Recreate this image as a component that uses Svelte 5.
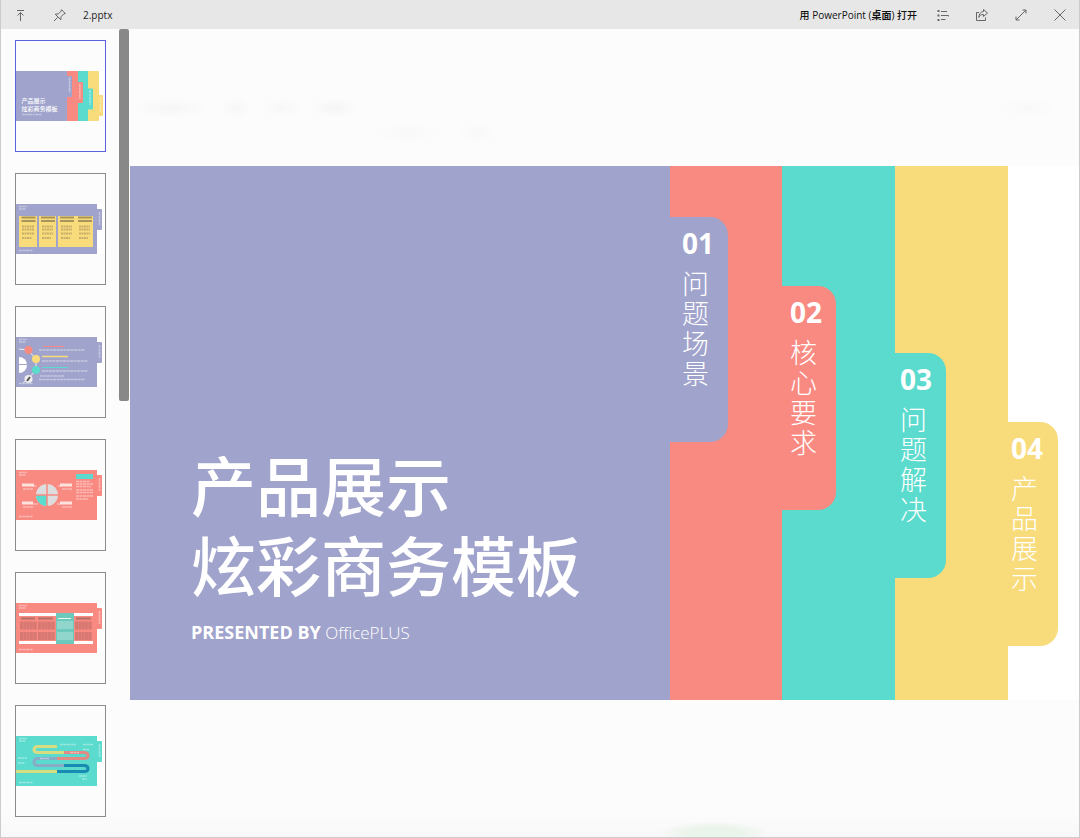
<script lang="ts">
	interface Tab {
		no: string;
		label: string;
		color: string;
		top: number;
		width: number;
		inset: number;
	}

	const purple = '#a0a3cb';
	const coral = '#f98a82';
	const teal = '#5bdbcd';
	const yellow = '#f8db7a';

	// top は band の高さに対する %
	const tabs: Tab[] = [
		{ no: '01', label: '问题场景', color: purple, top: 9.6, width: 58, inset: 12 },
		{ no: '02', label: '核心要求', color: coral, top: 22.4, width: 54, inset: 8 },
		{ no: '03', label: '问题解决', color: teal, top: 35.1, width: 51, inset: 5 },
		{ no: '04', label: '产品展示', color: yellow, top: 47.9, width: 50, inset: 3 }
	];

	const pages = [
		{ kind: 'cover', color: purple },
		{ kind: 'columns', color: purple },
		{ kind: 'steps', color: purple },
		{ kind: 'pie', color: coral },
		{ kind: 'table', color: coral },
		{ kind: 'road', color: teal }
	];

	let current = $state(0);
</script>

<div class="viewer">
	<header class="toolbar">
		<button class="tool" aria-label="收起">
			<svg viewBox="0 0 14 14"><path d="M3 2.5h7M6.5 13V4.500M3.500 7.500l3-3 3 3" /></svg>
		</button>
		<button class="tool" aria-label="固定">
			<svg viewBox="0 0 14 14"><path d="M1 13l3.700-3.700M8.500 1.700l3.800 3.800-1.500.4-2.700 2.700-.3 3.200-5.600-5.600 3.200-.3 2.700-2.700z" /></svg>
		</button>
		<span class="filename">2.pptx</span>
		<button class="open">用 PowerPoint (<b>桌面</b>) 打开</button>
		<button class="tool" aria-label="列表">
			<svg viewBox="0 0 14 14">
				<path d="M1.500 3h2M1.500 7.500h2M1.500 12h2" stroke-width="2" />
				<path d="M5 3.500h6M5 7.500h7.500M5 11.500h4.500M12.500 7.500v1" />
			</svg>
		</button>
		<button class="tool" aria-label="共享">
			<svg viewBox="0 0 14 14"><path d="M4 4.500H1.500v8h9v-3M8.500 1.500L12.500 5l-4 3.500v-2C6 6.500 4.500 7.500 3.800 9.500 4 6 5.500 3.800 8.500 3.500z" /></svg>
		</button>
		<button class="tool" aria-label="全屏">
			<svg viewBox="0 0 14 14"><path d="M2 12L12 2M8.500 2H12v3.500M2 8.500V12h3.500" /></svg>
		</button>
		<button class="tool" aria-label="关闭">
			<svg viewBox="0 0 14 14"><path d="M1.500 1.500l11 11M12.500 1.500l-11 11" /></svg>
		</button>
	</header>

	<div class="body">
		<nav class="sidebar">
			<div class="thumbs">
				{#each pages as page, i}
					<button
						class="thumb"
						class:active={current === i}
						aria-label="幻灯片 {i + 1}"
						onclick={() => (current = i)}
					>
						<svg viewBox="0 0 89 50">
							<rect width="89" height="50" fill="#fff" />
							{#if page.kind === 'cover'}
								<path fill={purple} d="M0 0h51v50H0z" />
								<path fill={coral} d="M51 0h11v50H51z" />
								<path fill={teal} d="M62 0h10v50H62z" />
								<path fill={yellow} d="M72 0h11v50H72z" />
								<rect x="50" y="5" width="6" height="21" rx="1" fill={purple} />
								<rect x="61" y="11" width="6" height="21" rx="1" fill={coral} />
								<rect x="71" y="17.5" width="6" height="21" rx="1" fill={teal} />
								<rect x="82" y="24" width="5" height="21" rx="1" fill={yellow} />
								<path class="faint" d="M53.5 6.5v15M63.8 13v15M74 19v15M84.5 26v15" />
								<text x="5.5" y="32">产品展示</text>
								<text x="5.5" y="39.5">炫彩商务模板</text>
								<path class="faint" d="M6 43.5h12M19 43.5h7" />
							{:else}
								<rect width="81" height="50" fill={page.color} />
								<rect x="79" y="5" width="7" height="21" rx="1" fill={page.color} />
								<path class="faint" d="M3 2.5h8M3 5h7M3 46.5h14M83.5 8v13" />
							{/if}
							{#if page.kind === 'columns'}
								<path fill={yellow} d="M3 12h18v31H3zM23 12h17v31H23zM42 12h35v31H42z" />
								<g fill="none" stroke-width="2">
									<path stroke="#a8955c" d="M5.5 13.5h14M25 13.5h14M44 13.5h14M62 13.5h14M5.5 17h14M25 17h14M44 17h14M62 17h14" />
									<path stroke="#c9b06a" stroke-dasharray="2 .5" d="M6 22.5h12M26 22.5h11M45 22.5h11M63 22.5h11M6 25.5h12M26 25.5h11M45 25.5h11M63 25.5h11M6 29.5h12M26 29.5h11M45 29.5h11M63 29.5h11M6 34h10M26 34h9M45 34h9M63 34h9" />
								</g>
							{:else if page.kind === 'steps'}
								<path fill="#fff" d="M3 20a8 8 0 0 1 0 16z" />
								<path stroke={purple} d="M3 27.5h8" />
								<path stroke="#eee" d="M3 12l9 1 8 9v11l-8 9-5 4" fill="none" />
								<circle cx="12.5" cy="13" r="4" fill={coral} />
								<circle cx="20" cy="22" r="4" fill={yellow} />
								<circle cx="20" cy="33" r="4" fill={teal} />
								<circle cx="12.5" cy="42" r="4" fill="#eee" />
								<path stroke="#555" stroke-width="2" d="M11 44l3-4" />
								<path stroke={coral} d="M27 9.5h21" />
								<path stroke={yellow} stroke-width="1.5" d="M26 19.5h26" />
								<path stroke={teal} d="M26 30.5h26" />
								<path class="faint" d="M23 13h46M26 24h46M26 34h46M23 42.5h46M24 39h24" />
							{:else if page.kind === 'pie'}
								<circle cx="31" cy="25" r="11" fill="#ddd" />
								<path fill={teal} d="M31 25v11a11 11 0 0 1-11-11z" />
								<path stroke={coral} stroke-width="1.5" d="M31 14v22M20 25h22" />
								<rect x="60" y="4" width="17" height="5" fill={teal} />
								<path stroke="#fff" stroke-width="3" opacity=".75" d="M6 15h12M6 33h11M44 15h12M44 33h12" />
								<path class="faint" d="M7 19h10M7 37h10M17 16h4M42 16h4M17 34h5M41 34h4M46 19h10M46 37h10M60 11.5h14M60 14h17M60 16.5h15M60 20h17M60 22.5h17M60 26h17M60 29h12" />
							{:else if page.kind === 'table'}
								<path fill="#fff" d="M3 10h74v3H3zM3 38h74v3H3z" />
								<rect x="40" y="10" width="18" height="31" fill="#6ec9bd" />
								<path stroke="#b46e68" stroke-width="2" d="M5 15.5h14M22 15.5h15M60 15.5h15" />
								<path stroke="#d77972" stroke-width="8" stroke-dasharray="3 .3" d="M4 22.5h17M22 22.5h17M59 22.5h17M4 33h17M22 33h17M59 33h17" />
								<path stroke="#90d6cc" stroke-width="8" d="M41 22h16M41 33h16" />
								<path stroke="#e9f6e8" d="M42 15.5h13" />
							{:else if page.kind === 'road'}
								<g fill="none" stroke-width="3">
									<path stroke="#d8dc80" d="M41 10.5H22q-4 0-4 3t4 3h27M0 35.5h41" />
									<path stroke="#e08c85" d="M48 16.5h20q4 0 4 3t-4 3H40" />
									<path stroke="#86acc6" d="M41 22.5H22q-4 0-4 3.5t4 3.5h27" />
									<path stroke="#178bb2" d="M48 29.5h20q4 0 4 3t-4 3H41" />
								</g>
								<path class="faint" d="M44 8.5h16M67 8.5h10M67 13.5h6M2 22h9M2 27h7M54 16.5h9M24 22.5h9M63 40h8M66 43h5" />
							{/if}
						</svg>
					</button>
				{/each}
			</div>
			<div class="track"><div class="bar"></div></div>
		</nav>

		<main class="stage">
			<article class="slide">
				{#each tabs as tab, i}
					<section class="band" style:background={tab.color}>
						{#if i === 0}
							<div class="cover">
								<h1>产品展示<br />炫彩商务模板</h1>
								<p><b>PRESENTED BY</b> OfficePLUS</p>
							</div>
						{/if}
						<div
							class="tab"
							style:background={tab.color}
							style:top="{tab.top}%"
							style:width="{tab.width}px"
							style:padding-left="{tab.inset}px"
						>
							<strong>{tab.no}</strong>
							<span>{tab.label}</span>
						</div>
					</section>
				{/each}
			</article>
		</main>
	</div>
</div>

<style>
	:global(body) {
		margin: 0;
		background: #fcfcfc;
		font-family: "Open Sans", "Noto Sans CJK SC", sans-serif;
	}

	.viewer {
		display: flex;
		flex-direction: column;
		min-height: 100vh;
		box-sizing: border-box;
		border: 1px solid #ccc;
		border-top: none;
		background:
			radial-gradient(closest-side, #ebf4eb 50%, transparent) 68% 101% / 110px 24px no-repeat,
			radial-gradient(closest-side, #f6f6f6, transparent) 13% 12% / 80px 20px no-repeat,
			radial-gradient(closest-side, #f6f6f6, transparent) 21% 12% / 30px 20px no-repeat,
			radial-gradient(closest-side, #f7f7f7, transparent) 25% 12% / 40px 20px no-repeat,
			radial-gradient(closest-side, #f5f5f5, transparent) 30% 12% / 50px 20px no-repeat,
			radial-gradient(closest-side, #f8f8f8, transparent) 37% 15% / 60px 20px no-repeat,
			radial-gradient(closest-side, #f8f8f8, transparent) 44% 15% / 40px 20px no-repeat,
			radial-gradient(closest-side, #f8f8f8, transparent) 98% 12% / 60px 20px no-repeat,
			linear-gradient(transparent 97%, #f8f8f8),
			#fcfcfc;
	}

	button {
		padding: 0;
		border: none;
		background: none;
		font: inherit;
		color: inherit;
		cursor: pointer;
	}

	.toolbar {
		display: flex;
		align-items: center;
		height: 29px;
		background: #e7e7e7;
		color: #222;
		font-size: 10px;
		line-height: 16px;
	}

	.tool {
		display: flex;
		align-items: center;
		justify-content: center;
		width: 39px;
		height: 29px;
	}

	.tool svg {
		width: 14px;
		height: 14px;
		fill: none;
		stroke: #666;
	}

	.filename {
		margin-left: 4px;
	}

	.open {
		margin-left: auto;
		margin-right: 6px;
		color: #111;
		font-weight: 500;
	}

	.body {
		display: flex;
		flex: 1;
	}

	.sidebar {
		display: flex;
		justify-content: space-between;
		width: 128px;
		flex-shrink: 0;
	}

	.thumbs {
		display: flex;
		flex-direction: column;
		gap: 21px;
		padding: 11px 0 20px 14px;
	}

	.thumb {
		display: flex;
		align-items: center;
		box-sizing: border-box;
		width: 91px;
		height: 112px;
		border: 1px solid #8b8b8b;
	}

	.thumb.active {
		border-color: #5b62e0;
	}

	.thumb svg {
		display: block;
		width: 89px;
		height: 50px;
	}

	.thumb text {
		font-size: 6px;
		font-weight: 500;
		fill: #fff;
	}

	.faint {
		fill: none;
		stroke: #fff;
		stroke-width: 1.5;
		stroke-dasharray: 3 .5;
		opacity: 0.4;
	}

	.track {
		width: 10px;
	}

	.bar {
		height: 46%;
		border-radius: 2px;
		background: #888;
	}

	.stage {
		display: flex;
		align-items: center;
		flex: 1;
		min-width: 0;
		padding-left: 1px;
	}

	.slide {
		display: grid;
		grid-template-columns: 540fr 112fr 113fr 113fr 71fr;
		width: 100%;
		aspect-ratio: 16 / 9;
		background: #fff;
		color: #fff;
	}

	.band {
		position: relative;
	}

	.cover {
		display: flex;
		flex-direction: column;
		justify-content: flex-end;
		box-sizing: border-box;
		height: 100%;
		padding: 0 0 54px 61px;
	}

	h1 {
		margin: 0 0 16px;
		font-family: "Noto Sans CJK SC", sans-serif;
		font-size: 65px;
		font-weight: 500;
		line-height: 80px;
		white-space: nowrap;
	}

	p {
		margin: 0;
		font-size: 17px;
		font-weight: 300;
		line-height: 26px;
	}

	p b {
		font-size: 18px;
		font-weight: 700;
	}

	/* 次の帯に重なる見出しタブ */
	.tab {
		position: absolute;
		left: 100%;
		z-index: 1;
		box-sizing: border-box;
		height: 42%;
		padding-top: 10px;
		border-radius: 0 18px 18px 0;
	}

	.tab strong {
		display: block;
		font-size: 28px;
		font-weight: 700;
		line-height: 32px;
	}

	.tab span {
		display: block;
		width: 27px;
		margin-top: 9px;
		font-family: "Noto Sans CJK SC", sans-serif;
		font-size: 27px;
		font-weight: 300;
		line-height: 30px;
		word-break: break-all;
	}
</style>
